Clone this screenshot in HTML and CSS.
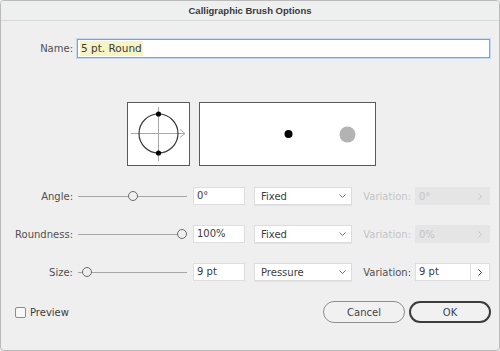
FILE: index.html
```html
<!DOCTYPE html>
<html>
<head>
<meta charset="utf-8">
<link rel="stylesheet" href="styles.css">
</head>
<body>
<div class="win">
  <div class="titlebar">Calligraphic Brush Options</div>

  <div class="namerow">
    <span class="lbl">Name:</span>
    <div class="namefield"><span class="hl">5 pt. Round</span></div>
  </div>

  <div class="previews">
    <div class="ringbox">
      <svg width="61" height="62" viewBox="0 0 61 62">
        <line x1="3" y1="30.5" x2="57" y2="30.5" stroke="#a8a8a8" stroke-width="1"/>
        <polyline points="52,26.5 57,30.5 52,34.5" fill="none" stroke="#a8a8a8" stroke-width="1"/>
        <line x1="30.5" y1="4" x2="30.5" y2="58" stroke="#a8a8a8" stroke-width="1"/>
        <circle cx="30.5" cy="30.5" r="19.5" fill="none" stroke="#3a3a3a" stroke-width="1.2"/>
        <circle cx="30.5" cy="11" r="2.6" fill="#000"/>
        <circle cx="30.5" cy="50" r="2.6" fill="#000"/>
      </svg>
    </div>
    <div class="strokebox">
      <svg width="175" height="62" viewBox="0 0 175 62">
        <circle cx="88.5" cy="31" r="4" fill="#000"/>
        <circle cx="147.5" cy="31.5" r="8" fill="#b3b3b3"/>
      </svg>
    </div>
  </div>

  <div class="param first">
    <span class="lbl">Angle:</span>
    <div class="slider"><span class="knob" style="left:50px"></span></div>
    <div class="field">0°</div>
    <div class="dropdown"><span>Fixed</span><svg class="chev" width="7" height="4" viewBox="0 0 7 4"><polyline points="0.5,0.5 3.5,3.5 6.5,0.5" fill="none" stroke="#777" stroke-width="1"/></svg></div>
    <span class="varlbl disabled">Variation:</span>
    <div class="varfield off"><span>0°</span><svg class="arrow" width="4" height="7" viewBox="0 0 4 7"><polyline points="0.5,0.5 3.5,3.5 0.5,6.5" fill="none" stroke="#c4c4c4" stroke-width="1"/></svg></div>
  </div>

  <div class="param">
    <span class="lbl">Roundness:</span>
    <div class="slider"><span class="knob" style="left:99px"></span></div>
    <div class="field">100%</div>
    <div class="dropdown"><span>Fixed</span><svg class="chev" width="7" height="4" viewBox="0 0 7 4"><polyline points="0.5,0.5 3.5,3.5 6.5,0.5" fill="none" stroke="#777" stroke-width="1"/></svg></div>
    <span class="varlbl disabled">Variation:</span>
    <div class="varfield off"><span>0%</span><svg class="arrow" width="4" height="7" viewBox="0 0 4 7"><polyline points="0.5,0.5 3.5,3.5 0.5,6.5" fill="none" stroke="#c4c4c4" stroke-width="1"/></svg></div>
  </div>

  <div class="param">
    <span class="lbl">Size:</span>
    <div class="slider"><span class="knob" style="left:4px"></span></div>
    <div class="field">9 pt</div>
    <div class="dropdown"><span>Pressure</span><svg class="chev" width="7" height="4" viewBox="0 0 7 4"><polyline points="0.5,0.5 3.5,3.5 6.5,0.5" fill="none" stroke="#777" stroke-width="1"/></svg></div>
    <span class="varlbl">Variation:</span>
    <div class="varfield on"><span class="vtext">9 pt</span><span class="vbtn"><svg width="4" height="7" viewBox="0 0 4 7"><polyline points="0.5,0.5 3.5,3.5 0.5,6.5" fill="none" stroke="#444" stroke-width="1"/></svg></span></div>
  </div>

  <div class="footer">
    <span class="check"></span>
    <span class="checklbl">Preview</span>
    <button class="btn cancel">Cancel</button>
    <button class="btn ok">OK</button>
  </div>
</div>
</body>
</html>
```

FILE: styles.css
```css
html, body {
  margin: 0;
  padding: 0;
  background: #efefef;
}
body {
  font-family: "DejaVu Sans", sans-serif;
  font-size: 10px;
  color: #505050;
}
.win {
  width: 500px;
  height: 351px;
  box-sizing: border-box;
  border: 1px solid #bababa;
  border-radius: 4px;
  background: #efefef;
  overflow: hidden;
}
.titlebar {
  height: 19px;
  line-height: 19px;
  border-bottom: 1px solid #d7d9d9;
  background: #eef0f0;
  text-align: center;
  font-family: "Liberation Sans", sans-serif;
  font-weight: bold;
  font-size: 9.5px;
  color: #3a3a3a;
}
.lbl {
  width: 72px;
  text-align: right;
  flex: none;
}
.namerow {
  display: flex;
  align-items: center;
  height: 19px;
  margin-top: 18px;
}
.namerow .lbl {
  margin-right: 4px;
}
.namefield {
  width: 413px;
  height: 19px;
  box-sizing: border-box;
  border: 1px solid #7ba2e0;
  box-shadow: 0 0 0 1px #c7d8f2;
  background: #fff;
  padding-left: 2px;
  display: flex;
  align-items: center;
}
.hl {
  background: #f6f3c4;
  font-size: 10.5px;
  color: #3a3a3a;
  padding: 1px 1px;
  line-height: 13px;
}
.previews {
  display: flex;
  gap: 9px;
  margin: 44px 0 0 126px;
}
.ringbox, .strokebox {
  height: 64px;
  box-sizing: border-box;
  border: 1px solid #5a5a5a;
  background: #fff;
}
.ringbox { width: 63px; }
.strokebox { width: 177px; }
.ringbox svg, .strokebox svg { display: block; }

.param {
  display: flex;
  align-items: center;
  height: 18px;
  margin-top: 20px;
}
.param.first { margin-top: 21px; }
.slider {
  position: relative;
  width: 109px;
  height: 18px;
  margin-left: 5px;
  flex: none;
}
.slider::before {
  content: "";
  position: absolute;
  left: 0;
  right: 0;
  top: 8.5px;
  height: 1px;
  background: #a6a6a6;
}
.knob {
  position: absolute;
  top: 4px;
  width: 10px;
  height: 10px;
  box-sizing: border-box;
  border: 1.6px solid #6a6a6a;
  border-radius: 50%;
  background: #efefef;
}
.field {
  width: 52px;
  height: 18px;
  box-sizing: border-box;
  margin-left: 6px;
  background: #fff;
  border: 1px solid #dedede;
  padding-left: 3px;
  line-height: 16px;
  color: #3c3c3c;
  flex: none;
}
.dropdown {
  width: 98px;
  height: 18px;
  box-sizing: border-box;
  margin-left: 9px;
  background: #fff;
  border: 1px solid #dcdcdc;
  box-shadow: 0 1px 0 #e2e2e2;
  padding: 0 5px 0 6px;
  display: flex;
  align-items: center;
  justify-content: space-between;
  color: #3c3c3c;
  flex: none;
}
.varlbl {
  width: 48px;
  margin-left: 11px;
  text-align: right;
  color: #505050;
  flex: none;
}
.varlbl.disabled { color: #c4c4c4; }
.varfield {
  width: 75px;
  height: 18px;
  box-sizing: border-box;
  margin-left: 4px;
  display: flex;
  align-items: center;
  flex: none;
}
.varfield.off {
  background: #e5e5e5;
  color: #c4c4c4;
  padding: 0 8px 0 4px;
  justify-content: space-between;
}
.varfield.on {
  background: #fff;
  border: 1px solid #dedede;
  color: #3c3c3c;
}
.vtext {
  flex: 1;
  padding-left: 3px;
  line-height: 16px;
}
.vbtn {
  width: 18px;
  height: 16px;
  border-left: 1px solid #dedede;
  display: flex;
  align-items: center;
  justify-content: center;
}
.chev, .arrow, .vbtn svg { display: block; }

.footer {
  display: flex;
  align-items: center;
  height: 22px;
  margin-top: 20px;
}
.check {
  width: 11px;
  height: 11px;
  box-sizing: border-box;
  margin-left: 14px;
  border: 1px solid #8c8c8c;
  border-radius: 2px;
  background: #f8f8f8;
}
.checklbl {
  margin-left: 4px;
  color: #3c3c3c;
}
.btn {
  font-family: "DejaVu Sans", sans-serif;
  font-size: 10px;
  color: #444;
  width: 82px;
  height: 22px;
  box-sizing: border-box;
  border-radius: 11px;
  background: #f1f1f1;
  padding: 0;
}
.cancel {
  margin-left: auto;
  border: 1px solid #8e8e8e;
}
.ok {
  margin-left: 4px;
  margin-right: 8px;
  border: 2px solid #3d3d3d;
}
```
